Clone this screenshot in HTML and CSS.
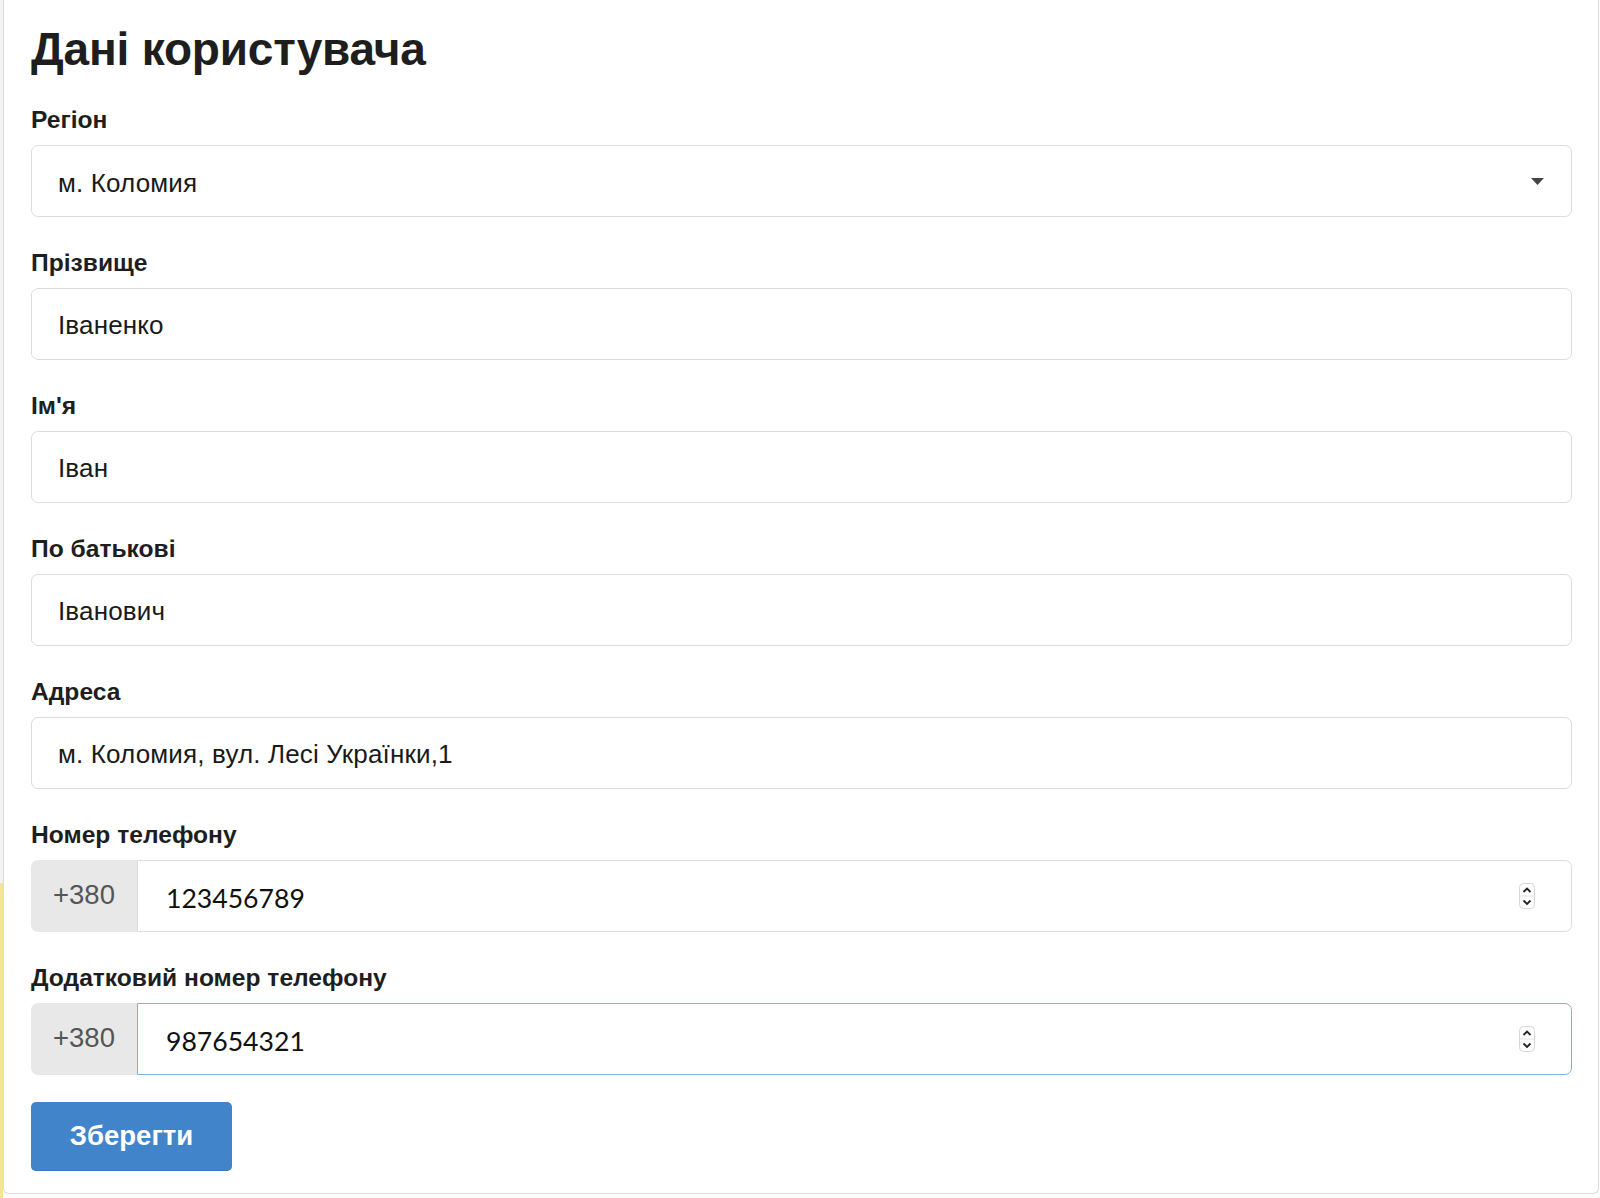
FILE: index.html
```html
<!DOCTYPE html>
<html lang="uk">
<head>
    <meta charset="UTF-8">
    <title>Дані користувача</title>
    <meta name="viewport" content="width=device-width, initial-scale=1.0">
    <link rel="stylesheet" href="styles.css">
</head>
<body>
<div class="card">
    <h1>Дані користувача</h1>

    <form id="userForm">
        <div class="form-group">
            <label for="region">Регіон</label>
            <div class="select-wrap">
                <select id="region" class="form-control">
                    <option>м. Коломия</option>
                </select>
                <svg class="caret" width="13" height="7" viewBox="0 0 13 7"><polygon points="0,0 13,0 6.5,7" fill="#444"/></svg>
            </div>
        </div>

        <div class="form-group">
            <label for="lastName">Прізвище</label>
            <input type="text" id="lastName" class="form-control" value="Іваненко">
        </div>

        <div class="form-group">
            <label for="firstName">Ім'я</label>
            <input type="text" id="firstName" class="form-control" value="Іван">
        </div>

        <div class="form-group">
            <label for="middleName">По батькові</label>
            <input type="text" id="middleName" class="form-control" value="Іванович">
        </div>

        <div class="form-group">
            <label for="address">Адреса</label>
            <input type="text" id="address" class="form-control" value="м. Коломия, вул. Лесі Українки,1">
        </div>

        <div class="form-group">
            <label for="phone">Номер телефону</label>
            <div class="input-group">
                <span class="prefix">+380</span>
                <div class="phone-field">
                    <input type="text" inputmode="numeric" id="phone" value="123456789">
                    <svg class="spinner" width="16" height="26" viewBox="0 0 16 26">
                        <rect x="0.5" y="0.5" width="15" height="25" rx="4" fill="#fff" stroke="#d6d6d6"/>
                        <line x1="1" y1="13" x2="15" y2="13" stroke="#e2e2e2"/>
                        <path d="M4.5 9 L8 5.5 L11.5 9" fill="none" stroke="#222" stroke-width="1.8"/>
                        <path d="M4.5 17.5 L8 21 L11.5 17.5" fill="none" stroke="#222" stroke-width="1.8"/>
                    </svg>
                </div>
            </div>
        </div>

        <div class="form-group">
            <label for="phone2">Додатковий номер телефону</label>
            <div class="input-group">
                <span class="prefix">+380</span>
                <div class="phone-field focused">
                    <input type="text" inputmode="numeric" id="phone2" value="987654321">
                    <svg class="spinner" width="16" height="26" viewBox="0 0 16 26">
                        <rect x="0.5" y="0.5" width="15" height="25" rx="4" fill="#fff" stroke="#d6d6d6"/>
                        <line x1="1" y1="13" x2="15" y2="13" stroke="#e2e2e2"/>
                        <path d="M4.5 9 L8 5.5 L11.5 9" fill="none" stroke="#222" stroke-width="1.8"/>
                        <path d="M4.5 17.5 L8 21 L11.5 17.5" fill="none" stroke="#222" stroke-width="1.8"/>
                    </svg>
                </div>
            </div>
        </div>

        <button type="submit" class="btn">Зберегти</button>
    </form>
</div>
<script>
document.getElementById('userForm').onsubmit = function(e) {
    e.preventDefault();
};
</script>
</body>
</html>
```

FILE: styles.css
```css
html, body { margin: 0; padding: 0; }
body {
    font-family: "Liberation Sans", Arial, sans-serif; color: #222; min-height: 1198px;
    background:
        linear-gradient(#f2f2f2, #f2f2f2) 0 0 / 3px 883px no-repeat,
        linear-gradient(#f5e39c, #f5e39c) 0 883px / 3px 100% no-repeat,
        #fbfbfb;
}
.card {
    margin: 0 1px 0 3px; background: #fff; border: 1px solid #dcdcdc; border-top: none;
    border-radius: 0 0 6px 6px; padding: 21px 26px 22px 27px;
}
h1 { font-size: 46px; line-height: 56px; margin: 0 0 28px; color: #1e1e1e; letter-spacing: -0.2px; }
.form-group + .form-group { margin-top: 31px; }
label { display: block; font-size: 24.6px; font-weight: bold; line-height: 30px; margin-bottom: 10px; color: #1e1e1e; }
.form-control {
    display: block; width: 100%; height: 72px; box-sizing: border-box; margin: 0;
    border: 1px solid #dcdcdc; border-radius: 7px; background: #fff;
    padding: 3px 26px 0; font-family: "Liberation Sans", Arial, sans-serif; font-size: 26px; letter-spacing: 0.15px; color: #1a1a1a;
    outline: none;
}
select.form-control { appearance: none; -webkit-appearance: none; }
.select-wrap { position: relative; }
.caret { position: absolute; right: 28px; top: 33px; }
.input-group { display: flex; height: 72px; }
.prefix {
    width: 106px; flex: none; display: flex; align-items: center; justify-content: center;
    background: #e8e8e8; border-radius: 7px 0 0 7px; color: #555; font-size: 27.5px; padding-bottom: 2px; box-sizing: border-box;
}
.phone-field {
    flex: 1; display: flex; align-items: center; background: #fff;
    border: 1px solid #dcdcdc; border-radius: 0 7px 7px 0; padding: 0 36px 0 28px;
}
.phone-field.focused { border-color: #84aedb; }
.phone-field input {
    flex: 1; border: 0; outline: none; padding: 4px 0 0; margin: 0; background: transparent;
    font-family: Lato, "Liberation Sans", sans-serif; font-size: 26.6px; color: #111;
}
.spinner { flex: none; }
.btn {
    display: block; margin-top: 27px; width: 201px; height: 69px; padding: 0;
    background: #4284ca; color: #fff; border: none; border-bottom: 1px solid #3a78bd; border-radius: 5px;
    font-family: "Liberation Sans", Arial, sans-serif; font-weight: bold; font-size: 27.5px; cursor: pointer;
}
.btn:hover { background: #3a78bd; }
```
